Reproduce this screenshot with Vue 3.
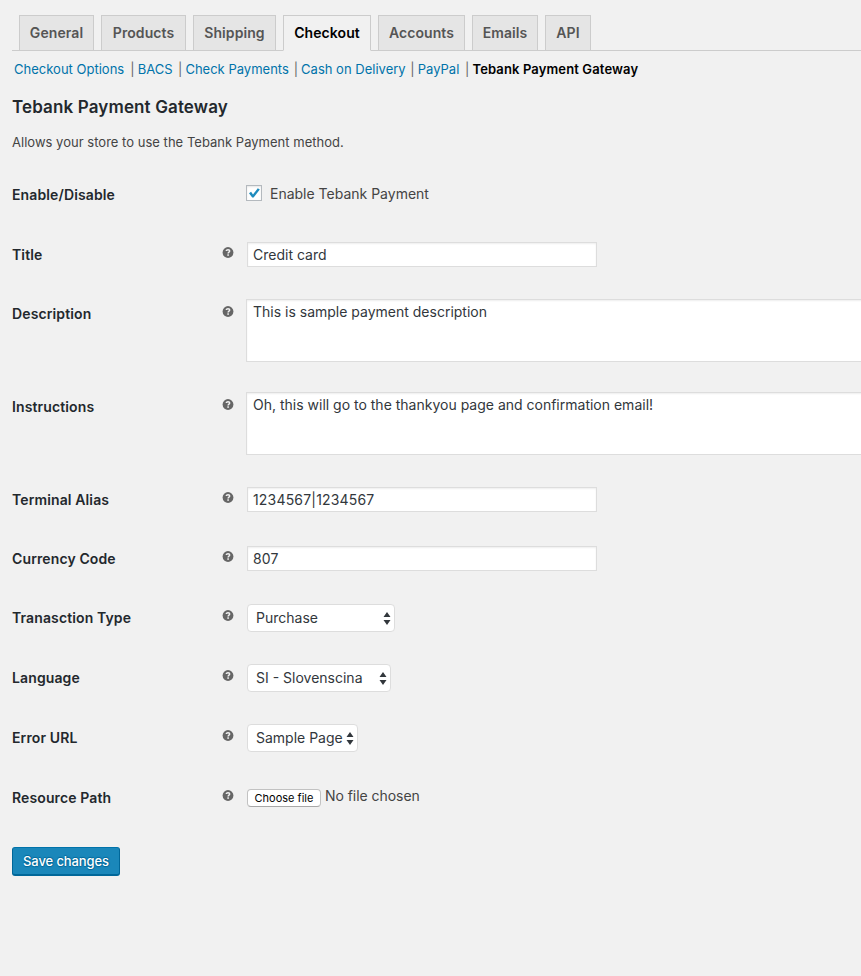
<script setup>
import { ref } from 'vue'

const tabs = [
  { label: 'General', width: 75 },
  { label: 'Products', width: 85 },
  { label: 'Shipping', width: 83 },
  { label: 'Checkout', width: 88, active: true },
  { label: 'Accounts', width: 87 },
  { label: 'Emails', width: 66 },
  { label: 'API', width: 46 },
]

const sections = [
  { label: 'Checkout Options', width: 111 },
  { label: 'BACS', width: 35 },
  { label: 'Check Payments', width: 103 },
  { label: 'Cash on Delivery', width: 104 },
  { label: 'PayPal', width: 42 },
  { label: 'Tebank Payment Gateway', width: 170, current: true },
]

const rows = ref([
  { label: 'Enable/Disable', type: 'checkbox', text: 'Enable Tebank Payment', height: 60 },
  { label: 'Title', type: 'text', value: 'Credit card', height: 59 },
  { label: 'Description', type: 'textarea', value: 'This is sample payment description', height: 93 },
  { label: 'Instructions', type: 'textarea', value: 'Oh, this will go to the thankyou page and confirmation email!', height: 93 },
  { label: 'Terminal Alias', type: 'text', value: '1234567|1234567', numeric: true, height: 59 },
  { label: 'Currency Code', type: 'text', value: '807', numeric: true, height: 59 },
  { label: 'Tranasction Type', type: 'select', value: 'Purchase', width: 148, height: 60 },
  { label: 'Language', type: 'select', value: 'SI - Slovenscina', width: 144, height: 60 },
  { label: 'Error URL', type: 'select', value: 'Sample Page', width: 111, height: 60 },
  { label: 'Resource Path', type: 'file', height: 60 },
])
</script>

<template>
  <main class="page">
    <nav class="tabs">
      <a v-for="t in tabs" :key="t.label" class="tab" :class="{ active: t.active }" :style="{ width: t.width + 'px' }">{{ t.label }}</a>
    </nav>
    <ul class="sections">
      <li v-for="(s, i) in sections" :key="s.label">
        <span v-if="i" class="bar">|</span>
        <a :class="{ current: s.current }" :style="{ width: s.width + 'px' }">{{ s.label }}</a>
      </li>
    </ul>
    <h3>Tebank Payment Gateway</h3>
    <p class="intro">Allows your store to use the Tebank Payment method.</p>

    <form class="form">
      <div v-for="r in rows" :key="r.label" class="row" :style="{ height: r.height + 'px' }">
        <div class="label">{{ r.label }}</div>
        <div class="tip">
          <svg v-if="r.type !== 'checkbox'" width="12" height="11" viewBox="0 0 12 11">
            <circle cx="6" cy="5.5" r="5.4" fill="#666" />
            <path d="M4.3 4.1C4.3 2.2 7.7 2.3 7.7 4.1C7.7 5.2 6.1 5.2 6.1 6.5" fill="none" stroke="#f1f1f1" stroke-width="1.5" />
            <rect x="5.3" y="7.3" width="1.6" height="1.5" fill="#f1f1f1" />
          </svg>
        </div>
        <label v-if="r.type === 'checkbox'" class="check">
          <span class="box">
            <svg width="14" height="14" viewBox="0 0 14 14">
              <path d="M2 7.2L4.1 5.8L6 8.5L10.8 2.2L12.8 3.5L6.6 11.6H5.2Z" fill="#1e8cbe" />
            </svg>
          </span>
          <span>{{ r.text }}</span>
        </label>
        <input v-else-if="r.type === 'text'" v-model="r.value" class="input" :class="{ numeric: r.numeric }" type="text" />
        <textarea v-else-if="r.type === 'textarea'" v-model="r.value" class="area"></textarea>
        <div v-else-if="r.type === 'select'" class="select" :style="{ width: r.width + 'px' }">
          <span>{{ r.value }}</span>
          <svg width="8" height="13" viewBox="0 0 8 13">
            <path d="M0.5 5L4 0L7.5 5ZM0.5 8L4 13L7.5 8Z" fill="#32373c" />
          </svg>
        </div>
        <div v-else class="file">
          <button type="button" class="choose">Choose file</button>
          <span class="none">No file chosen</span>
        </div>
      </div>
      <button type="button" class="save">Save changes</button>
    </form>
  </main>
</template>

<style>
body {
  background: #f1f1f1;
  overflow: hidden;
}
</style>

<style scoped>
* {
  box-sizing: border-box;
}
.page {
  height: 976px;
  padding: 15px 0 0 12px;
  overflow: hidden;
  background: #f1f1f1;
  color: #444;
  font-family: Inter, Roboto, sans-serif;
  font-size: 14px;
}
.tabs {
  display: flex;
  gap: 7px;
  height: 36px;
  padding-left: 7px;
  border-bottom: 1px solid #ccc;
}
.tab {
  height: 36px;
  border: 1px solid #ccc;
  background: #e5e5e5;
  color: #555;
  font-size: 14px;
  font-weight: 600;
  line-height: 34px;
  letter-spacing: 0.08px;
  text-align: center;
  white-space: nowrap;
}
.tab.active {
  border-bottom-color: #f1f1f1;
  background: #f1f1f1;
  color: #000;
}
.sections {
  display: flex;
  margin: 8px 0 0 2px;
  padding: 0;
  list-style: none;
  font-size: 13px;
  line-height: 20px;
  letter-spacing: 0.01px;
}
.sections li {
  display: flex;
  white-space: nowrap;
}
.sections a {
  color: #0073aa;
}
.sections .bar {
  width: 7.4px;
  margin-left: 5.3px;
  color: #666;
}
.sections a.current {
  color: #000;
  font-weight: 600;
  letter-spacing: 0.13px;
}
h3 {
  margin: 16px 0 0;
  color: #23282d;
  font-size: 17px;
  font-weight: 600;
  line-height: 24px;
  letter-spacing: 0.13px;
}
.intro {
  margin: 13px 0 0;
  font-size: 13px;
  line-height: 20px;
  letter-spacing: 0.02px;
}
.form {
  margin-top: 13px;
}
.row {
  display: grid;
  grid-template-columns: 210px 24px 1fr;
  align-items: start;
}
.label {
  padding-top: 20px;
  color: #23282d;
  font-weight: 600;
  line-height: 20px;
  letter-spacing: 0.12px;
}
.tip {
  padding-top: 22px;
  line-height: 0;
}
.tip svg {
  display: block;
}
.check {
  display: flex;
  gap: 8px;
  margin-top: 20px;
  line-height: 18px;
}
.box {
  width: 16px;
  height: 16px;
  border: 1px solid #b4b9be;
  background: #fff;
  box-shadow: inset 0 1px 2px rgba(0, 0, 0, 0.1);
}
.box svg {
  display: block;
}
.input,
.area {
  border: 1px solid #ddd;
  border-radius: 0;
  outline: 0;
  background: #fff;
  box-shadow: inset 0 1px 2px rgba(0, 0, 0, 0.07);
  color: #32373c;
  font: inherit;
}
.input {
  width: 350px;
  height: 25px;
  margin: 17px 0 0 1px;
  padding: 0 5px 1px;
}
.input.numeric {
  letter-spacing: 0.18px;
}
.area {
  width: 700px;
  height: 63px;
  margin: 15px 0 0;
  padding: 2px 6px;
  line-height: 20px;
  resize: none;
}
.select {
  display: flex;
  align-items: center;
  justify-content: space-between;
  height: 28px;
  margin: 16px 0 0 1px;
  padding: 0 3px 1px 8px;
  border: 1px solid #ddd;
  border-radius: 4px;
  background: #fff;
  color: #32373c;
  line-height: 18px;
  white-space: nowrap;
}
.select svg {
  margin-top: 1px;
}
.file {
  display: flex;
  gap: 4px;
  margin: 18px 0 0 1px;
  line-height: 20px;
}
.none {
  letter-spacing: -0.05px;
}
.choose {
  width: 74px;
  height: 18px;
  margin-top: 3px;
  padding: 0;
  border: 1px solid #c2c2c2;
  border-bottom-color: #a8a8a8;
  border-radius: 4px;
  background: #fff;
  color: #000;
  font: 11px/16px Inter, Roboto, sans-serif;
}
.save {
  display: block;
  width: 108px;
  height: 29px;
  margin-top: 19px;
  padding: 0;
  border: 1px solid #006799;
  border-top-color: #0073aa;
  border-bottom-width: 2px;
  border-radius: 3px;
  background: #1a87ba;
  color: #fff;
  font: 500 13px/26px Inter, Roboto, sans-serif;
  letter-spacing: -0.1px;
  text-shadow: 0 -1px 1px #006799, 1px 0 1px #006799, 0 1px 1px #006799;
}
</style>
